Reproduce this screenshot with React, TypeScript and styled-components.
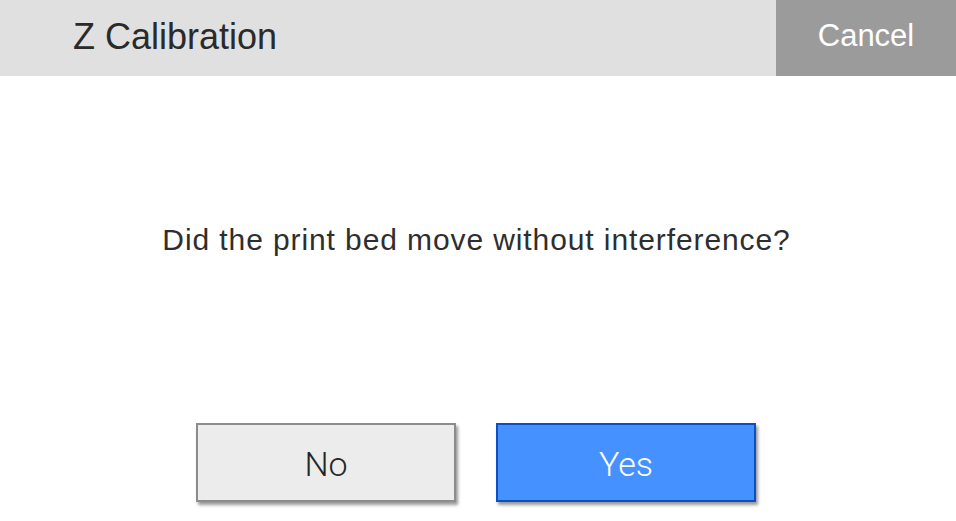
import styled, { createGlobalStyle } from 'styled-components'

const Global = createGlobalStyle`
  html, body {
    margin: 0;
    padding: 0;
    background: #ffffff;
  }
  #root {
    width: 956px;
    height: 521px;
  }
`

const Screen = styled.div`
  width: 956px;
  height: 521px;
  display: flex;
  flex-direction: column;
  font-family: 'Liberation Sans', Arial, sans-serif;
  overflow: hidden;
`

const Header = styled.div`
  height: 76px;
  display: flex;
  align-items: stretch;
  background: #e0e0e0;
`

const Title = styled.h1`
  flex: 1;
  margin: 0;
  padding-left: 73px;
  display: flex;
  align-items: center;
  font-size: 36px;
  font-weight: normal;
  color: #2a2a2a;
  padding-bottom: 2px;
`

const CancelButton = styled.button`
  width: 180px;
  border: none;
  background: #9b9b9b;
  color: #ffffff;
  font-family: inherit;
  font-size: 31px;
  padding: 0 0 4px;
  cursor: pointer;
`

const Body = styled.div`
  flex: 1;
  display: flex;
  flex-direction: column;
  align-items: center;
`

const Prompt = styled.p`
  margin: 146px 0 0;
  font-size: 30px;
  line-height: 36px;
  letter-spacing: 0.9px;
  color: #2e2e2e;
  padding-right: 3px;
`

const Actions = styled.div`
  margin-top: 165px;
  display: flex;
  gap: 40px;
  padding-right: 4px;
`

const ChoiceButton = styled.button<{ $primary?: boolean }>`
  box-sizing: border-box;
  width: 260px;
  height: 79px;
  border: 2px solid ${p => (p.$primary ? '#0b4fc2' : '#8c8c8c')};
  background: ${p => (p.$primary ? '#4591ff' : '#ececec')};
  color: ${p => (p.$primary ? '#ffffff' : '#262626')};
  box-shadow: 2px 3px 3px rgba(0, 0, 0, 0.4);
  font-family: Roboto, 'Liberation Sans', sans-serif;
  font-weight: 300;
  font-size: 34px;
  padding: 3px 0 0;
  cursor: pointer;
`

const App: React.FC = () => {
  return (
    <>
      <Global />
      <Screen>
        <Header>
          <Title>Z Calibration</Title>
          <CancelButton>Cancel</CancelButton>
        </Header>
        <Body>
          <Prompt>Did the print bed move without interference?</Prompt>
          <Actions>
            <ChoiceButton>No</ChoiceButton>
            <ChoiceButton $primary>Yes</ChoiceButton>
          </Actions>
        </Body>
      </Screen>
    </>
  )
}

export default App
